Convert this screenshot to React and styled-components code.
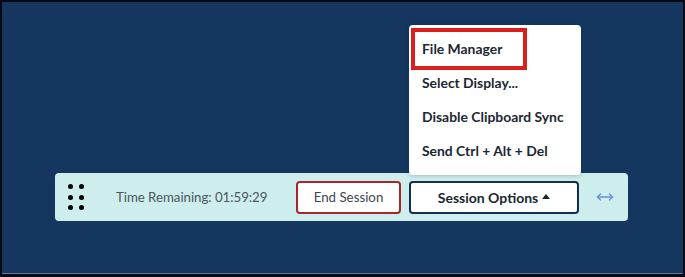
import React from "react";
import styled, { createGlobalStyle } from "styled-components";

const Global = createGlobalStyle`
  html, body {
    margin: 0;
    padding: 0;
    background: #000;
  }
  * {
    box-sizing: border-box;
  }
`;

const Frame = styled.div`
  width: 685px;
  height: 277px;
  border: 2px solid #050a12;
  border-bottom-width: 3px;
  background: #15375f;
  box-shadow: inset 0 -1px 0 #5a7aa0;
  display: flex;
  flex-direction: column;
  justify-content: flex-end;
  padding: 0 55px 53px 53px;
  font-family: Lato, "Open Sans", sans-serif;
`;

const Toolbar = styled.div`
  position: relative;
  height: 48px;
  width: 573px;
  background: #cdeeed;
  border-radius: 4px;
  display: flex;
  align-items: center;
  padding: 0 14px 0 13px;
`;

const Grip = styled.div`
  display: grid;
  grid-template-columns: repeat(2, 5px);
  grid-auto-rows: 5px;
  column-gap: 6px;
  row-gap: 5.5px;
  margin-right: 32px;
`;

const Dot = styled.span`
  width: 5px;
  height: 5px;
  border-radius: 50%;
  background: #000;
`;

const Timer = styled.span`
  font-size: 13.3px;
  color: #4b565e;
  letter-spacing: -0.05px;
  width: 180px;
`;

const Button = styled.button`
  height: 33px;
  background: #fff;
  border: 2px solid ${(p) => p.$border};
  border-radius: 4px;
  font-family: inherit;
  font-size: ${(p) => (p.$bold ? 14 : 13.3)}px;
  font-weight: ${(p) => (p.$bold ? 700 : 400)};
  color: ${(p) => (p.$bold ? "#1a2532" : "#3d4750")};
  width: ${(p) => p.$w}px;
  margin-right: ${(p) => p.$mr}px;
  display: flex;
  align-items: center;
  justify-content: center;
  gap: 4px;
  padding: 0;
  cursor: pointer;
`;

const Caret = styled.span`
  width: 0;
  height: 0;
  border-left: 4px solid transparent;
  border-right: 4px solid transparent;
  border-bottom: 5px solid #1a2532;
  margin-top: -2px;
`;

const Anchor = styled.div`
  position: relative;
`;

const Menu = styled.ul`
  position: absolute;
  left: 0;
  bottom: 39px;
  width: 172px;
  margin: 0;
  padding: 7px 0 7px;
  list-style: none;
  background: #fff;
  border-radius: 4px;
  box-shadow: 0 1px 4px rgba(0, 0, 0, 0.2);
  z-index: 2;
`;

const MenuItem = styled.li`
  position: relative;
  height: 34px;
  display: flex;
  align-items: center;
  padding-left: 13px;
  font-size: 13.9px;
  font-weight: 700;
  color: #1d2633;
  white-space: nowrap;
`;

const Highlight = styled.span`
  position: absolute;
  left: 2px;
  top: -4px;
  width: 116px;
  height: 42px;
  border: 4px solid #d9201f;
`;

const Resize = styled.svg`
  width: 18px;
  height: 10px;
  margin-left: 17px;
`;

const items = [
  "File Manager",
  "Select Display...",
  "Disable Clipboard Sync",
  "Send Ctrl + Alt + Del",
];

export default function App() {
  return (
    <>
      <Global />
      <Frame>
        <Toolbar>
          <Grip>
            {Array.from({ length: 6 }).map((_, i) => (
              <Dot key={i} />
            ))}
          </Grip>
          <Timer>Time Remaining: 01:59:29</Timer>
          <Button $border="#a8262a" $w={105} $mr={8}>
            End Session
          </Button>
          <Anchor>
            <Menu>
              {items.map((t, i) => (
                <MenuItem key={t}>
                  {i === 0 && <Highlight />}
                  {t}
                </MenuItem>
              ))}
            </Menu>
            <Button $border="#142e4f" $w={170} $mr={0} $bold>
              Session Options <Caret />
            </Button>
          </Anchor>
          <Resize viewBox="0 0 18 10" fill="none" stroke="#6b8fd6" strokeWidth="1.4" strokeLinecap="round" strokeLinejoin="round">
            <path d="M1.5 5h15" />
            <path d="M4.5 2L1.5 5l3 3" />
            <path d="M13.5 2l3 3-3 3" />
          </Resize>
        </Toolbar>
      </Frame>
    </>
  );
}
